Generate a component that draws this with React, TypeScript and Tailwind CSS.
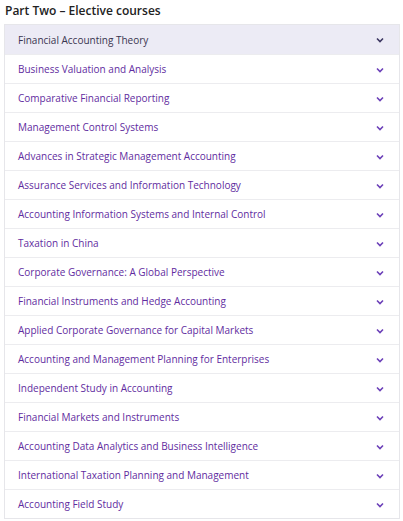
const courses = [
  "Financial Accounting Theory",
  "Business Valuation and Analysis",
  "Comparative Financial Reporting",
  "Management Control Systems",
  "Advances in Strategic Management Accounting",
  "Assurance Services and Information Technology",
  "Accounting Information Systems and Internal Control",
  "Taxation in China",
  "Corporate Governance: A Global Perspective",
  "Financial Instruments and Hedge Accounting",
  "Applied Corporate Governance for Capital Markets",
  "Accounting and Management Planning for Enterprises",
  "Independent Study in Accounting",
  "Financial Markets and Instruments",
  "Accounting Data Analytics and Business Intelligence",
  "International Taxation Planning and Management",
  "Accounting Field Study",
]

function Chevron({ dark }: { dark: boolean }) {
  return (
    <svg width="8" height="6" viewBox="0 0 8 6" className="shrink-0">
      <path
        d="M1 1.5 L4 4.5 L7 1.5"
        fill="none"
        stroke={dark ? "#3b3560" : "#6b3fb8"}
        strokeWidth="1.6"
      />
    </svg>
  )
}

export default function App() {
  return (
    <div className="w-[403px] h-[521px] bg-white font-['Open_Sans',sans-serif] overflow-hidden">
      {/* Header */}
      <h2 className="pl-[5px] pt-[1px] h-[24px] text-[12px] leading-[20px] font-semibold text-[#222]">
        Part Two – Elective courses
      </h2>

      {/* Accordion */}
      <div className="ml-[4px] w-[396px] border border-[#e6e6ea]">
        {courses.map((c, i) => (
          <div
            key={c}
            className={`flex items-center justify-between h-[29px] pt-[1px] pl-[13px] pr-[15px] ${
              i > 0 ? "border-t border-[#ececef]" : ""
            } ${i === 0 ? "bg-[#ecebf5]" : "bg-white"}`}
          >
            <span
              className={`text-[10px] ${
                i === 0 ? "text-[#3a3550]" : "text-[#5f2ca0]"
              }`}
            >
              {c}
            </span>
            <Chevron dark={i === 0} />
          </div>
        ))}
      </div>
    </div>
  )
}
